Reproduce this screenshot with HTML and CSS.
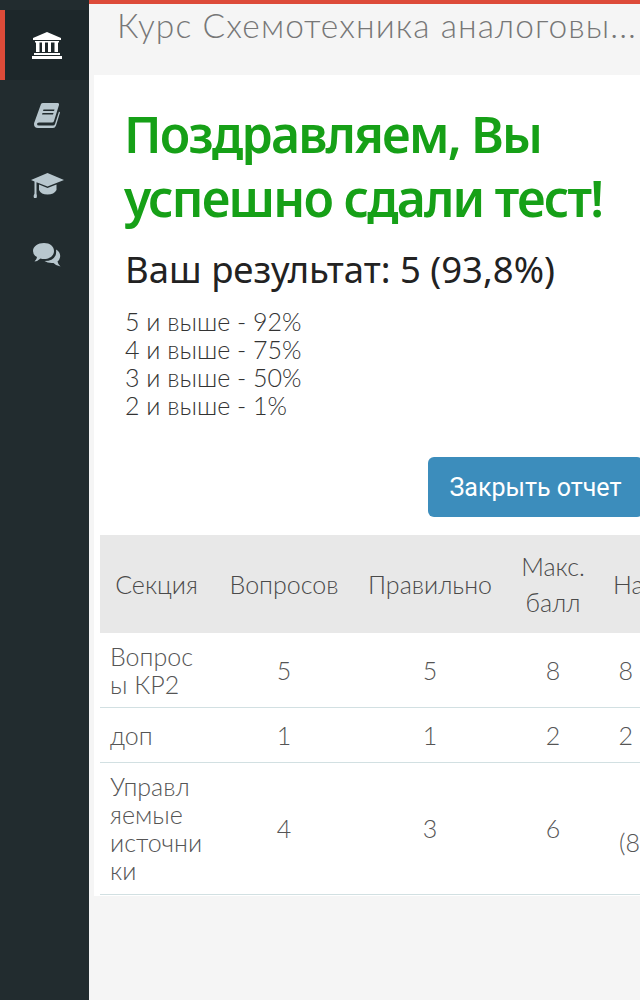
FILE: index.html
```html
<!DOCTYPE html>
<html lang="ru">
<head>
  <meta charset="UTF-8" />
  <title>Результат теста</title>
  <link rel="stylesheet" href="styles.css">
</head>
<body>

<aside class="sidebar">
  <a class="side-item active">
    <svg width="30" height="27" viewBox="0 0 30 27"><path d="M15 0L29 6V8H1V6Z"/><rect x="3" y="9" width="24" height="1.5"/><rect x="4" y="10" width="3.5" height="10"/><rect x="10" y="10" width="3" height="10"/><rect x="16" y="10" width="3" height="10"/><rect x="22.500" y="10" width="3.500" height="10"/><rect x="2" y="21" width="26" height="2"/><rect x="0" y="24" width="30" height="3"/></svg>
  </a>
  <a class="side-item">
    <svg width="26" height="25" viewBox="0 0 26 25"><path fill-rule="evenodd" d="M7 1Q7.500 0 9 0H24Q25.500 .5 25 2L20 18Q19.500 19.500 18 19.500H5Q3 19.500 3 21T5 22.500H19Q20.500 22.500 21 21L25 8.500L26 9.500L22 22.500Q21 25 19 25H4Q0 25 0 21Q0 20 .5 19ZM9.500 6.500L9 8H20L20.500 6.500ZM8.500 10L8 11.500H19L19.500 10Z"/></svg>
  </a>
  <a class="side-item">
    <svg width="33" height="25" viewBox="0 0 33 25"><path d="M16.500 0L33 7L16.500 13.500L5.500 9.200V20.500Q6.500 24 5.500 25H3Q2 23 3.500 20.500V8.400L0 7Z"/><path d="M8 11.500L16.500 15L25.500 11.500V17Q23 21.500 16.500 21.500T8 17Z"/></svg>
  </a>
  <a class="side-item">
    <svg width="28" height="24" viewBox="0 0 28 24"><path d="M11 0C17 0 21 3.500 21 8S17 16 11 16Q9 16 7.500 15.500Q5 18 1.500 18.500Q4 16 4 14Q0 12 0 8C0 3.500 5 0 11 0Z"/><path d="M23 6.500Q28 9.500 27 14.500Q26.500 17 24.500 18.500Q25 21.500 27.500 23.500Q23 23 20.500 20Q15 20.500 11.500 18Q20 18 22.500 12.500Q23.500 9.500 23 6.500Z"/></svg>
  </a>
</aside>

<div class="content">
  <header class="course-head">
    <h1>Курс Схемотехника аналоговы...</h1>
  </header>

  <main class="report">
    <h2 class="success">Поздравляем, Вы успешно сдали тест!</h2>
    <p class="result">Ваш результат: 5 (93,8%)</p>
    <ul class="grades">
      <li>5 и выше - 92%</li>
      <li>4 и выше - 75%</li>
      <li>3 и выше - 50%</li>
      <li>2 и выше - 1%</li>
    </ul>
    <div class="actions">
      <button class="btn-close">Закрыть отчет</button>
    </div>

    <table class="sections">
      <colgroup>
        <col class="col-name"><col class="col-count"><col class="col-right"><col class="col-max"><col class="col-got">
      </colgroup>
      <thead>
        <tr>
          <th>Секция</th>
          <th>Вопросов</th>
          <th>Правильно</th>
          <th>Макс. балл</th>
          <th class="got-head">Набрано</th>
        </tr>
      </thead>
      <tbody>
        <tr>
          <td class="name">Вопрос<br>ы КР2</td>
          <td>5</td>
          <td>5</td>
          <td>8</td>
          <td class="got">8 (100%)</td>
        </tr>
        <tr>
          <td class="name">доп</td>
          <td>1</td>
          <td>1</td>
          <td>2</td>
          <td class="got">2 (100%)</td>
        </tr>
        <tr>
          <td class="name">Управл<br>яемые<br>источни<br>ки</td>
          <td>4</td>
          <td>3</td>
          <td>6</td>
          <td class="got">5<br>(83,33%)</td>
        </tr>
      </tbody>
    </table>
  </main>
</div>

</body>
</html>
```

FILE: styles.css
```css
body {
  margin: 0;
  width: 640px;
  height: 1000px;
  overflow: hidden;
  display: flex;
  background: #f5f5f5;
  color: #555;
  font-family: 'Lato', 'Open Sans', sans-serif;
  font-weight: 300;
}
.sidebar {
  flex: 0 0 89px;
  box-sizing: border-box;
  padding-top: 10px;
  background: #222c2f;
}
.side-item {
  height: 70px;
  display: flex;
  align-items: center;
  justify-content: center;
  padding-left: 5px;
  box-sizing: border-box;
  fill: #b8c7ce;
}
.side-item.active {
  background: #1d272a;
  border-left: 5px solid #dd4b39;
  padding-left: 0;
  fill: #fff;
}
.content {
  flex: 0 0 551px;
  min-width: 0;
  border-top: 4px solid #dd4b39;
}
.course-head {
  height: 71px;
  box-sizing: border-box;
  padding: 3px 0 0 28px;
}
.course-head h1 {
  margin: 0;
  font-size: 33.5px;
  font-weight: 300;
  line-height: 36px;
  letter-spacing: 1.1px;
  color: #777;
  white-space: nowrap;
}
.report {
  margin-left: 5px;
  height: 821px;
  box-sizing: border-box;
  padding: 27px 0 0 6px;
  background: #fff;
}
.success {
  margin: 0 0 0 24px;
  width: 500px;
  font-family: 'Noto Sans', sans-serif;
  font-size: 50px;
  font-weight: 600;
  line-height: 64px;
  letter-spacing: -1.8px;
  color: #16a017;
}
.result {
  margin: 16px 0 0 25px;
  font-family: 'Noto Sans', sans-serif;
  font-size: 36.5px;
  font-weight: 400;
  line-height: 46px;
  color: #222;
}
.grades {
  list-style: none;
  margin: 15px 0 0 25px;
  padding: 0;
  font-size: 25px;
  line-height: 28px;
  color: #333;
}
.actions {
  display: flex;
  justify-content: flex-end;
  margin: 38px -3px 0 0;
}
.btn-close {
  width: 215px;
  height: 60px;
  padding: 0;
  border: none;
  border-radius: 6px;
  background: #3c8dbc;
  color: #fff;
  font-family: 'Roboto', sans-serif;
  font-size: 25px;
}
.sections {
  margin-top: 18px;
  border-collapse: collapse;
  table-layout: fixed;
  width: 633px;
}
.col-name { width: 113px; }
.col-count { width: 142px; }
.col-right { width: 150px; }
.col-max { width: 96px; }
.col-got { width: 132px; }
.sections th {
  height: 98px;
  padding: 0 12px;
  background: #e8e8e8;
  font-size: 25px;
  font-weight: 300;
  line-height: 36px;
  color: #4a4a4a;
}
.sections th.got-head {
  text-align: left;
}
.sections td {
  padding: 9px 10px;
  border-bottom: 1px solid #d2e0e2;
  font-size: 25px;
  line-height: 28px;
  text-align: center;
  color: #555;
}
.sections td.name {
  text-align: left;
}
.sections td.got {
  padding-left: 0;
  padding-right: 0;
  white-space: nowrap;
}
.sections tbody tr:nth-child(2) td {
  padding-top: 13px;
  padding-bottom: 13px;
}
.sections tbody tr:last-child td {
  padding-bottom: 10px;
}
```
